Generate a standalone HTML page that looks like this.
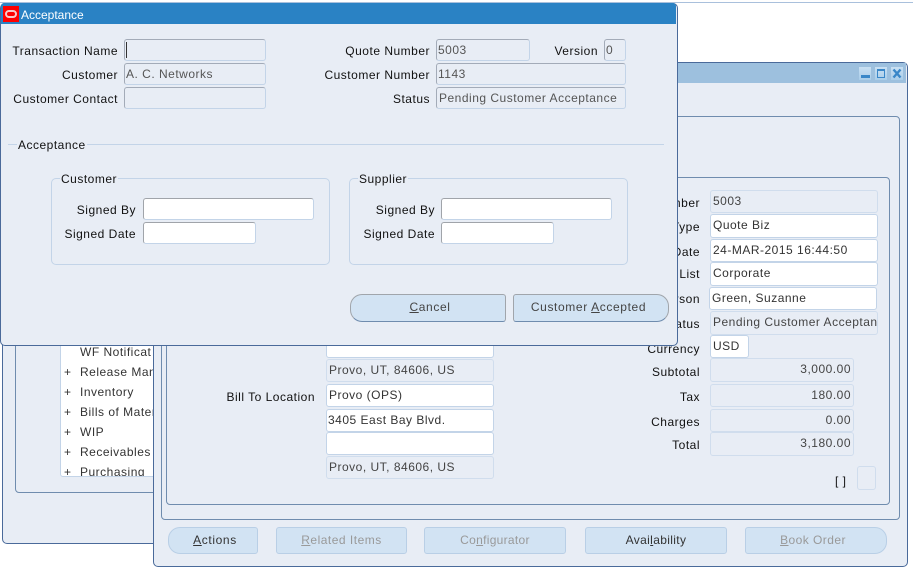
<!DOCTYPE html>
<html><head><meta charset="utf-8">
<style>
html,body{margin:0;padding:0;width:913px;height:571px;overflow:hidden;background:#fff}
body{position:relative;font-family:"Liberation Sans",sans-serif;font-size:12px;letter-spacing:.5px;color:#111}
div{position:absolute;box-sizing:border-box}
.t{white-space:nowrap;height:16px;line-height:16px}
.r{text-align:right}
.win{background:#e8edf5;border:1px solid #4a6a9a;border-radius:5px}
.panel{border:1px solid #6f8cae;border-radius:4px}
.f{border:1px solid #c3d4e8;border-radius:3px;white-space:nowrap;overflow:hidden;line-height:20px;padding-left:2px;color:#333}
.w{background:#fff}
.ro{background:#e8edf5;color:#444;border-color:#d0dded}
.g{background:#e8edf5;border-top-color:#a3abb8;border-left-color:#a3abb8;color:#555}
.e{background:#fff;border-top:1px solid #a0a4aa;border-left:1px solid #a0a4aa}
.group{border:1px solid #c3d4e8;border-radius:5px}
.lab{background:#e8edf5;padding:0 1px}
.btn{height:27px;background:#d2e3f3;border:1px solid #b9cfe6;border-radius:3px;text-align:center;line-height:25px;color:#333}
.dis{color:#999}
.dbtn{height:28px;background:#d2e3f3;border:1px solid #a0a5ab;border-bottom-color:#6f8cae;border-radius:3px;text-align:center;line-height:25px;color:#444;letter-spacing:.62px}
.li{left:80px;color:#333}
.pl{left:64px;color:#333}
</style></head><body>

<div style="left:0;top:2px;width:913px;height:1px;background:#a9c0dc"></div>

<!-- back window -->
<div class="win" style="left:2px;top:200px;width:200px;height:344px"></div>
<div class="panel" style="left:15px;top:250px;width:200px;height:243px"></div>
<div style="left:60px;top:300px;width:100px;height:177px;background:#fff;border:1px solid #c3d4e8;border-radius:3px;overflow:hidden">
  <div class="t li" style="left:19px;top:43px">WF Notificat</div>
  <div class="t pl" style="left:3px;top:63px">+</div><div class="t li" style="left:19px;top:63px">Release Management</div>
  <div class="t pl" style="left:3px;top:83px">+</div><div class="t li" style="left:19px;top:83px">Inventory</div>
  <div class="t pl" style="left:3px;top:103px">+</div><div class="t li" style="left:19px;top:103px">Bills of Material</div>
  <div class="t pl" style="left:3px;top:123px">+</div><div class="t li" style="left:19px;top:123px">WIP</div>
  <div class="t pl" style="left:3px;top:143px">+</div><div class="t li" style="left:19px;top:143px">Receivables</div>
  <div class="t pl" style="left:3px;top:163px">+</div><div class="t li" style="left:19px;top:163px">Purchasing</div>
</div>

<!-- main window -->
<div class="win" style="left:153px;top:62px;width:755px;height:505px"></div>
<div style="left:154px;top:63px;width:752px;height:20px;background:#9dc0de"></div>
<div style="left:859px;top:67px;width:12px;height:13px;background:linear-gradient(#c9e0f3,#a9cde9)"></div>
<div style="left:861px;top:75px;width:9px;height:3px;background:#3a87c8"></div>
<div style="left:875px;top:67px;width:12px;height:13px;background:linear-gradient(#c9e0f3,#a9cde9)"></div>
<div style="left:877px;top:69px;width:8px;height:9px;border:1px solid #3a87c8;border-top-width:2px"></div>
<div style="left:891px;top:67px;width:12px;height:13px;background:linear-gradient(#c9e0f3,#a9cde9)"></div>
<svg style="position:absolute;left:891px;top:67px" width="12" height="13"><path d="M2.5 2.5 L9.5 10.5 M9.5 2.5 L2.5 10.5" stroke="#3a87c8" stroke-width="2.4" fill="none"/></svg>

<div class="panel" style="left:161px;top:116px;width:739px;height:404px"></div>
<div class="panel" style="left:166px;top:177px;width:724px;height:328px"></div>

<div class="t r" style="right:213px;top:195px">Order Number</div>
<div class="t r" style="right:213px;top:219px">Order Type</div>
<div class="t r" style="right:213px;top:244px">Ordered Date</div>
<div class="t r" style="right:213px;top:266px">Price List</div>
<div class="t r" style="right:213px;top:291px">Salesperson</div>
<div class="t r" style="right:213px;top:316px">Status</div>
<div class="t r" style="right:213px;top:341px">Currency</div>
<div class="t r" style="right:213px;top:364px">Subtotal</div>
<div class="t r" style="right:213px;top:389px">Tax</div>
<div class="t r" style="right:213px;top:414px">Charges</div>
<div class="t r" style="right:213px;top:437px">Total</div>

<div class="f ro" style="left:710px;top:190px;width:168px;height:23px">5003</div>
<div class="f w" style="left:710px;top:214px;width:168px;height:24px">Quote Biz</div>
<div class="f w" style="left:710px;top:239px;width:168px;height:23px">24-MAR-2015 16:44:50</div>
<div class="f w" style="left:710px;top:262px;width:168px;height:24px">Corporate</div>
<div class="f w" style="left:709px;top:287px;width:168px;height:23px">Green, Suzanne</div>
<div class="f ro" style="left:710px;top:311px;width:168px;height:24px">Pending Customer Acceptance</div>
<div class="f w" style="left:710px;top:335px;width:39px;height:23px">USD</div>
<div class="f ro r" style="left:710px;top:358px;width:144px;height:24px;padding-right:2px;text-align:right">3,000.00</div>
<div class="f ro r" style="left:710px;top:384px;width:144px;height:23px;padding-right:2px;text-align:right">180.00</div>
<div class="f ro r" style="left:710px;top:409px;width:144px;height:23px;padding-right:2px;text-align:right">0.00</div>
<div class="f ro r" style="left:710px;top:432px;width:144px;height:24px;padding-right:2px;text-align:right">3,180.00</div>
<div class="t" style="left:835px;top:473px">[ ]</div>
<div class="f ro" style="left:857px;top:466px;width:19px;height:24px"></div>

<div class="t r" style="right:598px;top:389px">Bill To Location</div>
<div class="f w" style="left:326px;top:330px;width:168px;height:28px"></div>
<div class="f ro" style="left:326px;top:359px;width:168px;height:23px">Provo, UT, 84606, US</div>
<div class="f w" style="left:326px;top:384px;width:168px;height:23px">Provo (OPS)</div>
<div class="f w" style="left:326px;top:409px;width:168px;height:23px;padding-left:1px">3405 East Bay Blvd.</div>
<div class="f w" style="left:326px;top:432px;width:168px;height:23px"></div>
<div class="f ro" style="left:326px;top:456px;width:168px;height:23px">Provo, UT, 84606, US</div>

<div class="btn" style="left:168px;top:527px;width:90px;border-radius:12px 3px 3px 12px;padding-left:4px;letter-spacing:.62px"><u>A</u>ctions</div>
<div class="btn dis" style="left:276px;top:527px;width:131px"><u>R</u>elated Items</div>
<div class="btn dis" style="left:424px;top:527px;width:142px;letter-spacing:.3px">Co<u>n</u>figurator</div>
<div class="btn" style="left:585px;top:527px;width:142px;letter-spacing:.35px">Avai<u>l</u>ability</div>
<div class="btn dis" style="left:745px;top:527px;width:142px;border-radius:3px 12px 12px 3px;padding-right:6px;letter-spacing:.45px"><u>B</u>ook Order</div>

<!-- dialog -->
<div class="win" style="left:0;top:3px;width:678px;height:343px"></div>
<div style="left:1px;top:3px;width:675px;height:21px;background:#2a82c4;border-radius:3px 3px 0 0"></div>
<div style="left:3px;top:6px;width:16px;height:16px;background:#ff0000"></div>
<div style="left:5px;top:10px;width:12px;height:8px;border:2px solid #f7c9c9;border-radius:4px"></div>
<div class="t" style="left:21px;top:7px;color:#fff;letter-spacing:0">Acceptance</div>

<div class="t r" style="right:795px;top:43px">Transaction Name</div>
<div class="t r" style="right:795px;top:67px">Customer</div>
<div class="t r" style="right:795px;top:91px">Customer Contact</div>
<div class="f g" style="left:124px;top:39px;width:142px;height:22px"></div>
<div style="left:126px;top:42px;width:1px;height:16px;background:#333"></div>
<div class="f g" style="left:124px;top:63px;width:142px;height:22px;padding-left:1px">A. C. Networks</div>
<div class="f g" style="left:124px;top:87px;width:142px;height:22px"></div>

<div class="t r" style="right:483px;top:43px">Quote Number</div>
<div class="t r" style="right:315px;top:43px">Version</div>
<div class="t r" style="right:483px;top:67px">Customer Number</div>
<div class="t r" style="right:483px;top:91px">Status</div>
<div class="f g" style="left:436px;top:39px;width:94px;height:22px;padding-left:1px">5003</div>
<div class="f g" style="left:604px;top:39px;width:22px;height:22px;padding-left:1px">0</div>
<div class="f g" style="left:436px;top:63px;width:190px;height:22px;padding-left:1px">1143</div>
<div class="f g" style="left:436px;top:87px;width:190px;height:22px">Pending Customer Acceptance</div>

<div style="left:8px;top:144px;width:656px;height:1px;background:#c3d4e8"></div>
<div class="t lab" style="left:17px;top:137px">Acceptance</div>

<div class="group" style="left:51px;top:178px;width:279px;height:87px"></div>
<div class="t lab" style="left:60px;top:171px">Customer</div>
<div class="t r" style="right:777px;top:202px">Signed By</div>
<div class="t r" style="right:777px;top:226px">Signed Date</div>
<div class="f e" style="left:143px;top:198px;width:171px;height:22px"></div>
<div class="f e" style="left:143px;top:222px;width:113px;height:22px"></div>

<div class="group" style="left:349px;top:178px;width:279px;height:87px"></div>
<div class="t lab" style="left:358px;top:171px">Supplier</div>
<div class="t r" style="right:478px;top:202px">Signed By</div>
<div class="t r" style="right:478px;top:226px">Signed Date</div>
<div class="f e" style="left:441px;top:198px;width:171px;height:22px"></div>
<div class="f e" style="left:441px;top:222px;width:113px;height:22px"></div>

<div class="dbtn" style="left:350px;top:294px;width:156px;border-radius:12px 3px 3px 12px;padding-left:4px"><u>C</u>ancel</div>
<div class="dbtn" style="left:513px;top:294px;width:156px;border-radius:3px 12px 12px 3px;padding-right:5px">Customer <u>A</u>ccepted</div>

</body></html>
